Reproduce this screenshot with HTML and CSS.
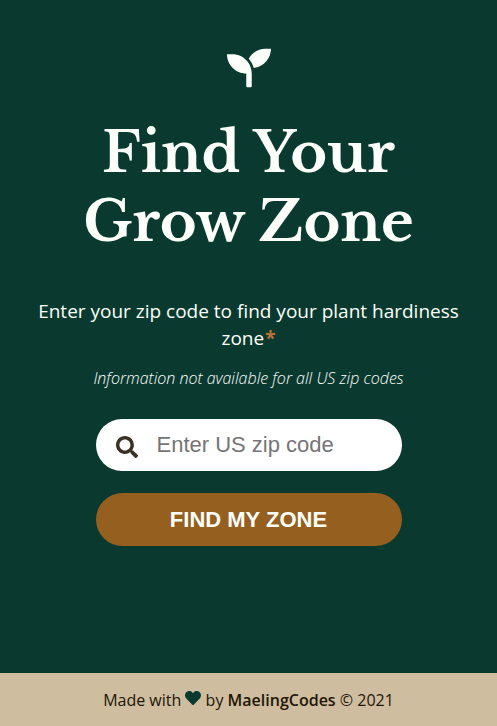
FILE: index.html
```html
<!DOCTYPE html>
<html lang="en">
<head>
  <meta charset="utf-8">
  <meta name="viewport" content="width=device-width, initial-scale=1">
  <title>Find Your Grow Zone</title>
  <link rel="stylesheet" href="styles.css">
</head>
<body>
  <main class="main">
    <svg class="logo" viewBox="0 0 512 512" aria-hidden="true"><path d="M64 96H0c0 123.700 100.300 224 224 224v144c0 8.800 7.200 16 16 16h32c8.800 0 16-7.200 16-16V320C288 196.300 187.700 96 64 96zm384-64c-84.200 0-157.400 46.500-195.700 115.200 27.700 30.200 48.200 66.900 59 107.600C424 243.100 512 147.900 512 32h-64z"/></svg>
    <h1 class="title">Find Your Grow Zone</h1>
    <form class="form">
      <label class="intro" for="zip">Enter your zip code to find your plant hardiness zone<span class="asterisk">*</span></label>
      <p class="note">Information not available for all US zip codes</p>
      <div class="search">
        <svg class="search-icon" viewBox="0 0 512 512" aria-hidden="true"><path d="M505 442.700L405.300 343c-4.500-4.500-10.600-7-17-7H372c27.600-35.300 44-79.700 44-128C416 93.100 322.900 0 208 0S0 93.100 0 208s93.100 208 208 208c48.300 0 92.700-16.400 128-44v16.300c0 6.400 2.500 12.500 7 17l99.700 99.700c9.400 9.400 24.600 9.400 33.900 0l28.300-28.300c9.400-9.400 9.400-24.600.1-34zM208 336c-70.700 0-128-57.200-128-128 0-70.700 57.200-128 128-128 70.700 0 128 57.200 128 128 0 70.700-57.200 128-128 128z"/></svg>
        <input class="zip" id="zip" type="text" inputmode="numeric" placeholder="Enter US zip code">
      </div>
      <button class="submit" type="submit">FIND MY ZONE</button>
    </form>
  </main>
  <footer class="footer">
    <p class="credit">Made with <svg class="heart" viewBox="0 0 512 512" role="img" aria-label="love"><path d="M462.300 62.600C407.500 15.900 326 24.300 275.700 76.200L256 96.500l-19.700-20.300C186.100 24.300 104.500 15.900 49.700 62.600c-62.800 53.600-66.100 149.800-9.900 207.900l193.500 199.800c12.500 12.900 32.800 12.900 45.300 0l193.500-199.800c56.300-58.100 53-154.300-9.800-207.900z"/></svg> by <a class="author" href="#">MaelingCodes</a> © 2021</p>
  </footer>
</body>
</html>
```

FILE: styles.css
```css
* {
  box-sizing: border-box;
}

body {
  margin: 0;
  min-height: 100vh;
  display: flex;
  flex-direction: column;
  background: #0a3a2f;
  color: #fcfffa;
  font-family: "Open Sans", sans-serif;
}

.main {
  flex: 1;
  display: flex;
  flex-direction: column;
  align-items: center;
  padding: 46px 24px 32px;
  text-align: center;
}

.logo {
  width: 44px;
  height: 44px;
  fill: currentColor;
}

.title {
  max-width: 400px;
  margin: 28px 0 42px;
  font-family: "Libre Baskerville", "Liberation Serif", serif;
  font-size: 56px;
  font-weight: 700;
  line-height: 69px;
}

.form {
  display: flex;
  flex-direction: column;
  align-items: center;
}

.intro {
  font-size: 19px;
  font-weight: 500;
  line-height: 27px;
}

.asterisk {
  padding-left: 1px;
  color: #b87333;
  font-weight: 700;
}

.note {
  margin: 15px 0 30px;
  color: #fff;
  font-size: 16px;
  font-style: italic;
  font-weight: 300;
  line-height: 22px;
}

.search {
  display: flex;
  align-items: center;
  gap: 19px;
  width: 306px;
  height: 52px;
  padding: 0 20px;
  border-radius: 26px;
  background: #fff;
}

.search-icon {
  flex: none;
  width: 22px;
  height: 22px;
  margin-top: 3px;
  fill: #3b3024;
}

.zip {
  flex: 1;
  min-width: 0;
  padding: 0;
  border: 0;
  outline: 0;
  background: transparent;
  color: #3b3024;
  font: 22px "Liberation Sans", Arial, sans-serif;
}

.zip::placeholder {
  color: #757575;
}

.submit {
  width: 306px;
  height: 53px;
  margin-top: 22px;
  border: 0;
  border-radius: 27px;
  background: #955f20;
  color: #fcfffa;
  font: 700 22px "Liberation Sans", Arial, sans-serif;
  cursor: pointer;
}

.footer {
  padding: 17px 16px 15px;
  background: #cfbda0;
  color: #221506;
  text-align: center;
}

.credit {
  margin: 0;
  font-size: 16px;
  line-height: 21px;
}

.heart {
  width: 16px;
  height: 16px;
  fill: #0a3a2f;
}

.author {
  color: inherit;
  font-weight: 600;
  text-decoration: none;
}
```
